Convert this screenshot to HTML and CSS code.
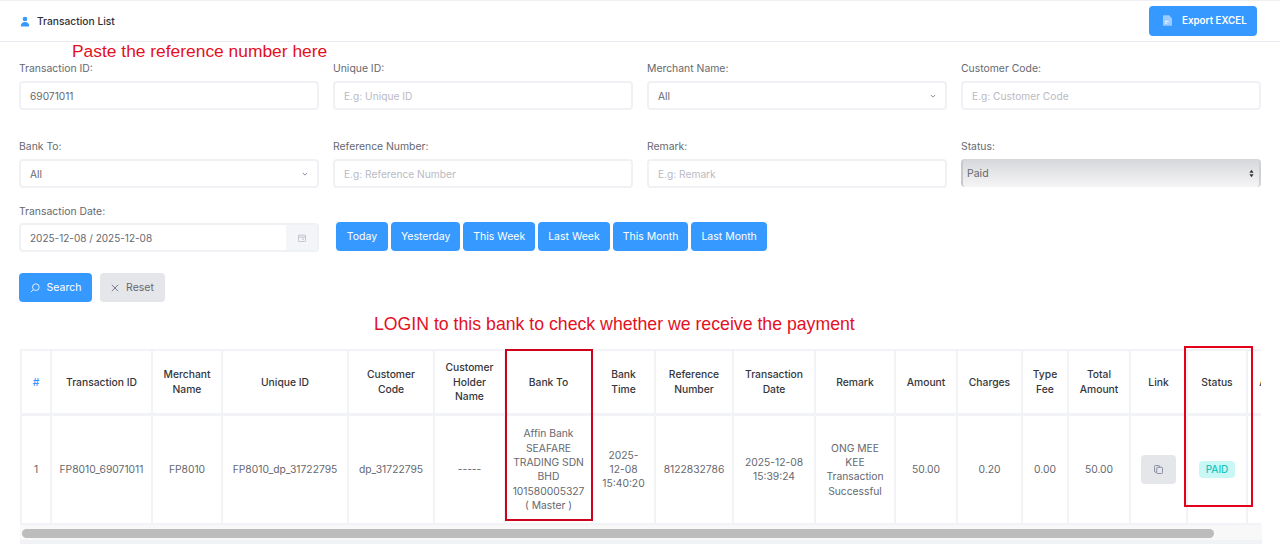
FILE: index.html
```html
<!DOCTYPE html>
<html lang="en">
<head>
<meta charset="utf-8">
<title>Transaction List</title>
<link rel="stylesheet" href="styles.css">
</head>
<body>
<header class="topbar">
  <div class="title">
    <svg class="title-icon" viewBox="0 0 12 12" width="10" height="11"><circle cx="6" cy="3" r="2.8" fill="#3699ff"/><path d="M1 11.4C1 8.4 3 6.6 6 6.6s5 1.8 5 4.8c0 .3-.2.6-.6.6H1.6c-.4 0-.6-.3-.6-.6z" fill="#3699ff"/></svg>
    <span>Transaction List</span>
  </div>
  <button class="btn btn-export">
    <svg viewBox="0 0 12 14" width="9" height="11"><path d="M1 0h7l4 4v9a1 1 0 0 1-1 1H1a1 1 0 0 1-1-1V1a1 1 0 0 1 1-1z" fill="#9ccbff"/><path d="M2.5 8h5M2.5 10.5h3" stroke="#fff" stroke-width="1.2"/></svg>
    Export EXCEL
  </button>
</header>

<main class="content">
  <form class="filters">
    <div class="field"><label>Transaction ID:</label><input class="input" value="69071011"></div>
    <div class="field"><label>Unique ID:</label><input class="input" placeholder="E.g: Unique ID"></div>
    <div class="field"><label>Merchant Name:</label><div class="input fake-select">All<svg viewBox="0 0 8 8" width="6" height="6"><path d="M1 2.5l3 3 3-3" fill="none" stroke="#7e8299" stroke-width="1.2"/></svg></div></div>
    <div class="field"><label>Customer Code:</label><input class="input" placeholder="E.g: Customer Code"></div>

    <div class="field"><label>Bank To:</label><div class="input fake-select">All<svg viewBox="0 0 8 8" width="6" height="6"><path d="M1 2.5l3 3 3-3" fill="none" stroke="#7e8299" stroke-width="1.2"/></svg></div></div>
    <div class="field"><label>Reference Number:</label><input class="input" placeholder="E.g: Reference Number"></div>
    <div class="field"><label>Remark:</label><input class="input" placeholder="E.g: Remark"></div>
    <div class="field"><label>Status:</label><div class="status-select">Paid<svg viewBox="0 0 6 10" width="5" height="9"><path d="M3 .5L5.5 4h-5zM3 9.5L.5 6h5z" fill="#333"/></svg></div></div>

    <div class="field"><label>Transaction Date:</label>
      <div class="date-group">
        <div class="date-value">2025-12-08 / 2025-12-08</div>
        <div class="date-addon"><svg viewBox="0 0 10 10" width="8" height="8"><rect x=".5" y="1.5" width="9" height="8" rx="1" fill="none" stroke="#b5b5c3"/><path d="M.5 4h9M5 6.5h2.5" stroke="#b5b5c3"/></svg></div>
      </div>
    </div>
    <div class="quick-range">
      <button type="button" class="btn btn-quick">Today</button>
      <button type="button" class="btn btn-quick">Yesterday</button>
      <button type="button" class="btn btn-quick">This Week</button>
      <button type="button" class="btn btn-quick">Last Week</button>
      <button type="button" class="btn btn-quick">This Month</button>
      <button type="button" class="btn btn-quick">Last Month</button>
    </div>
  </form>

  <div class="actions">
    <button class="btn btn-search"><svg viewBox="0 0 12 12" width="10" height="10"><circle cx="7" cy="5" r="4" fill="none" stroke="#fff" stroke-width="1"/><path d="M4 8L1 11" stroke="#fff" stroke-width="1"/></svg>Search</button>
    <button class="btn btn-reset"><svg viewBox="0 0 10 10" width="8" height="8"><path d="M1 1l8 8M9 1l-8 8" stroke="#5e6278" stroke-width="1"/></svg>Reset</button>
  </div>

  <div class="table-wrap">
    <table class="grid">
      <colgroup>
        <col class="c-no"><col class="c-txn"><col class="c-mer"><col class="c-uid"><col class="c-code"><col class="c-holder"><col class="c-bank"><col class="c-time"><col class="c-ref"><col class="c-date"><col class="c-remark"><col class="c-amt"><col class="c-chg"><col class="c-type"><col class="c-total"><col class="c-link"><col class="c-status"><col class="c-action">
      </colgroup>
      <thead>
        <tr>
          <th class="hash">#</th><th>Transaction ID</th><th>Merchant Name</th><th>Unique ID</th><th>Customer Code</th><th>Customer Holder Name</th><th>Bank To</th><th>Bank Time</th><th>Reference Number</th><th>Transaction Date</th><th>Remark</th><th>Amount</th><th>Charges</th><th>Type Fee</th><th>Total Amount</th><th>Link</th><th>Status</th><th>Action</th>
        </tr>
      </thead>
      <tbody>
        <tr>
          <td>1</td><td>FP8010_69071011</td><td>FP8010</td><td>FP8010_dp_31722795</td><td>dp_31722795</td><td>-----</td>
          <td>Affin Bank<br>SEAFARE TRADING SDN BHD<br>101580005327<br>( Master )</td>
          <td>2025-<br>12-08<br>15:40:20</td><td>8122832786</td><td>2025-12-08 15:39:24</td><td>ONG MEE KEE Transaction Successful</td><td>50.00</td><td>0.20</td><td>0.00</td><td>50.00</td>
          <td><span class="copy"><svg viewBox="0 0 10 10" width="9" height="9"><rect x="3" y="2.5" width="6.5" height="7" rx="1" fill="none" stroke="#7e8299"/><path d="M3 8H1.5a1 1 0 0 1-1-1V1.5a1 1 0 0 1 1-1H5a1 1 0 0 1 1 1V2.5" fill="none" stroke="#7e8299"/></svg></span></td>
          <td><span class="badge">PAID</span></td><td></td>
        </tr>
      </tbody>
    </table>
  </div>
  <div class="scroll-track"><div class="scroll-thumb"></div></div>
</main>

<div class="note note-paste">Paste the reference number here</div>
<div class="note note-login">LOGIN to this bank to check whether we receive the payment</div>
<div class="box box-bank"></div>
<div class="box box-status"></div>
</body>
</html>
```

FILE: styles.css
```css
* { box-sizing: border-box; }
html, body { height: 100%; }
body {
  margin: 0;
  background: #fff;
  font-family: Inter, "Liberation Sans", sans-serif;
  font-size: 10.5px;
  color: #66686f;
  overflow: hidden;
  position: relative;
}
.topbar {
  height: 42px;
  border-top: 1px solid #eff0f4;
  border-bottom: 1px solid #e8e9ee;
  display: flex;
  align-items: center;
  justify-content: space-between;
  padding: 0 23px 0 20px;
}
.title { display: flex; align-items: center; gap: 7px; color: #2f3036; font-weight: 500; font-size: 10.25px; }
.btn {
  border: 0;
  border-radius: 4px;
  font-family: inherit;
  font-size: 10.5px;
  display: inline-flex;
  align-items: center;
  justify-content: center;
}
.btn-export { background: #3699ff; color: #fff; font-weight: 600; width: 108px; height: 30px; gap: 10px; font-size: 9.8px; justify-content: flex-start; padding-left: 14px; margin-top: -1px; }
.content { padding: 0 19px; }
.filters {
  display: grid;
  grid-template-columns: repeat(4, 300px);
  column-gap: 14px;
  grid-template-rows: 78px 65px 58px;
  padding-top: 20px;
  height: 231px;
}
.field { display: flex; flex-direction: column; }
.field label { height: 19px; line-height: 13px; font-size: 10.4px; color: #66686f; }
.input {
  height: 29px;
  border: 2px solid #f0f1f5;
  border-radius: 4px;
  padding: 0 9px;
  font: inherit;
  font-size: 10.2px;
  color: #66686f;
  background: #fff;
  outline: none;
  width: 100%;
}
.input::placeholder { color: #b9bac4; }
.fake-select { display: flex; align-items: center; justify-content: space-between; }
.status-select {
  height: 28px;
  border-radius: 4px;
  background: linear-gradient(#d6d7da, #f5f5f6);
  border-left: 2px solid #c8c9cc;
  border-right: 2px solid #d0d1d4;
  color: #66686f;
  padding: 0 5px 0 4px;
  display: flex;
  align-items: center;
  justify-content: space-between;
}
.date-group { display: flex; height: 29px; border: 2px solid #f0f1f5; border-radius: 4px; margin-top: -1px; }
.date-value { flex: 1; display: flex; align-items: center; padding-left: 9px; font-size: 10px; }
.date-addon { width: 31px; background: #f4f5f8; display: flex; align-items: center; justify-content: center; }
.quick-range { grid-column: 2 / 5; display: flex; gap: 3px; padding-left: 3px; padding-top: 17px; align-items: flex-start; }
.btn-quick { background: #3699ff; color: #fff; height: 29px; padding: 0 10px; min-width: 52px; }
.actions { display: flex; gap: 8px; height: 76px; }
.btn-search, .btn-reset { height: 29px; gap: 7px; }
.btn-search { background: #3699ff; color: #fff; width: 73px; }
.btn-reset { background: #e4e6ea; color: #66686f; width: 65px; }
.table-wrap {
  width: 1241px;
  overflow: hidden;
  margin-left: 1px;
}
.grid { border-collapse: collapse; table-layout: fixed; width: 1283px; }
.c-no { width: 30px; } .c-txn { width: 101px; } .c-mer { width: 70px; } .c-uid { width: 126px; } .c-code { width: 86px; }
.c-holder { width: 71px; } .c-bank { width: 87px; } .c-time { width: 63px; } .c-ref { width: 78px; } .c-date { width: 82px; }
.c-remark { width: 80px; } .c-amt { width: 62px; } .c-chg { width: 65px; } .c-type { width: 46px; } .c-total { width: 62px; }
.c-link { width: 57px; } .c-status { width: 60px; } .c-action { width: 56px; }
.grid th, .grid td {
  border: 2px solid #f2f3f6;
  text-align: center;
  padding: 0 5px;
  font-size: 10.3px;
  line-height: 14.3px;
}
.grid tbody td { height: 110px; color: #66686f; overflow: hidden; }
.grid thead th { height: 64px; border-bottom-width: 3px; color: #35363c; font-weight: 500; }
.grid thead th.hash { color: #3699ff; }
.copy { display: inline-flex; width: 35px; height: 29px; background: #e4e6ea; border-radius: 4px; align-items: center; justify-content: center; vertical-align: middle; }
.badge { display: inline-block; background: #c9f7f5; color: #1bc5bd; border-radius: 4px; padding: 0 7px; height: 17px; line-height: 17px; font-size: 10px; font-weight: 500; }
.scroll-track { margin-left: 1px; width: 1242px; height: 19px; background: #f8f8f9; padding: 4px 2px 0; border-bottom: 4px solid #f1f2f5; }
.scroll-thumb { width: 1192px; height: 9px; background: #bcbcbc; border-radius: 5px; }
.note { position: absolute; color: #e3101f; font-family: "Liberation Sans", sans-serif; line-height: 20px; white-space: nowrap; }
.note-paste { left: 72px; top: 41px; font-size: 17.4px; }
.note-login { left: 374px; top: 314px; font-size: 17.7px; }
.box { position: absolute; pointer-events: none; }
.box-bank { left: 505px; top: 349px; width: 88px; height: 172px; border: 2px solid #d0021b; }
.box-status { left: 1184px; top: 346px; width: 69px; height: 161px; border: 2px solid #e3001b; }
```
